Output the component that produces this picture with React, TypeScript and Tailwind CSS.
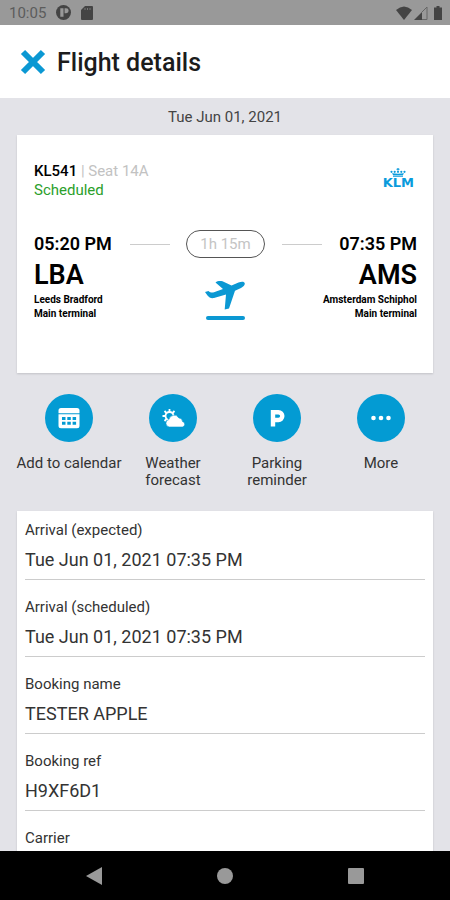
import React from 'react';

const actions = [
    { label: 'Add to calendar', icon: 'calendar' },
    { label: 'Weather forecast', icon: 'weather' },
    { label: 'Parking reminder', icon: 'parking' },
    { label: 'More', icon: 'more' },
];

const details = [
    { label: 'Arrival (expected)', value: 'Tue Jun 01, 2021 07:35 PM' },
    { label: 'Arrival (scheduled)', value: 'Tue Jun 01, 2021 07:35 PM' },
    { label: 'Booking name', value: 'TESTER APPLE' },
    { label: 'Booking ref', value: 'H9XF6D1' },
    { label: 'Carrier', value: '' },
];

// === Icons ===
//=====================================
const ActionIcon: React.FC<{ name: string }> = ({ name }) => {
    if (name === 'calendar') {
        return (
            <svg width="24" height="24" viewBox="0 0 24 24" fill="#fff" aria-hidden="true">
                <path d="M4 2h16a2.500 2.500 0 0 1 2.500 2.500V7.200h-21V4.500A2.500 2.500 0 0 1 4 2z" />
                <path fillRule="evenodd" d="M1.500 8.300h21v11.500a2.500 2.500 0 0 1-2.500 2.500H4a2.500 2.500 0 0 1-2.500-2.500zM5 11v3h3.500v-3zM10.300 11v3h3.500v-3zM15.600 11v3h3.500v-3zM5 15.800v3h3.500v-3zM10.300 15.800v3h3.500v-3zM15.600 15.800v3h3.500v-3z" />
            </svg>
        );
    }
    if (name === 'weather') {
        return (
            <svg width="24" height="24" viewBox="0 0 24 24" aria-hidden="true">
                <g stroke="#fff" strokeWidth="1.800" fill="none">
                    <circle cx="8.500" cy="10" r="4" />
                    <path d="M8.500 3v3M1.500 10h3M13 10h2.500M3.500 5l2 2M13.500 5l-2 2M3.500 15l2-2" />
                </g>
                <path d="M8.500 21a3.800 3.800 0 0 1-.6-7.500 5.400 5.400 0 0 1 10-1.500 3.600 3.600 0 0 1 3.600 3.500A2.800 2.800 0 0 1 21.500 21z" fill="#fff" stroke="#039bd3" strokeWidth=".6" />
            </svg>
        );
    }
    if (name === 'parking') {
        return (
            <svg width="24" height="24" viewBox="0 0 24 24" aria-hidden="true">
                <path d="M8 20.500V6.200h5.400a3.900 3.900 0 0 1 0 7.800H8" fill="none" stroke="#fff" strokeWidth="4.400" />
            </svg>
        );
    }
    return (
        <svg width="24" height="24" viewBox="0 0 24 24" fill="#fff" aria-hidden="true">
            <circle cx="4.500" cy="12" r="2.300" />
            <circle cx="12" cy="12" r="2.300" />
            <circle cx="19.500" cy="12" r="2.300" />
        </svg>
    );
};

const KlmLogo: React.FC = () => (
    <div className="flex flex-col items-center text-[#0a9bdc]" role="img" aria-label="KLM">
        <svg width="16" height="9" viewBox="0 0 16 9" fill="currentColor" aria-hidden="true">
            <path d="M7.400 0h1.200v.8h.9v1h-.9v.8H7.400v-.8h-.9v-1h.9z" />
            <circle cx="1.500" cy="3.800" r="1.100" />
            <circle cx="4.700" cy="3.800" r="1.100" />
            <circle cx="8" cy="3.800" r="1.100" />
            <circle cx="11.300" cy="3.800" r="1.100" />
            <circle cx="14.500" cy="3.800" r="1.100" />
            <path d="M2 5.300q6 .9 12 0l-1 1.700H3zM3 7.500h10v1.300H3z" />
        </svg>
        <span className="font-[DejaVu_Sans,sans-serif] text-[13px] leading-[11px] font-bold">KLM</span>
    </div>
);

const PlaneIcon: React.FC = () => (
    <svg width="42" height="42" viewBox="0 0 42 42" aria-hidden="true" fill="#0b98d3">
        <path d="M0 12l3.500-1c1.500 1.500 3.500 2 5.500 1.300L18 9l-7.500-6.500c2-1.700 4.500-1.800 7-1.200l9 4.200L33.500 2.500c3-1.300 6-1.200 6.300.8.200 2.200-1.800 3.700-3.800 4.700l-6 2.800L24 28.500l-4.300 1 1.300-15L9 18c-3 .5-5-.5-6.500-2.500z" />
        <rect x="1" y="36" width="39" height="4" rx="2" />
    </svg>
);

const FlightDetails: React.FC = () => {
    return (
        <div className="flex h-screen flex-col overflow-hidden bg-[#e3e3e8] font-[Roboto,sans-serif] text-[#333]">
            {/* Status bar */}
            <div className="flex h-[25px] shrink-0 items-center bg-[#999] pr-2 pl-[9px] text-[#444]">
                <span className="text-[15px] leading-5 text-[#5c5c5c]">10:05</span>
                <svg className="ml-[10px]" width="15" height="15" viewBox="0 0 14 14" aria-hidden="true">
                    <circle cx="7" cy="7" r="7" fill="currentColor" />
                    <path d="M4 3h3v8H4zM8 3h1.500a2.300 2.300 0 0 1 0 4.600H8z" fill="#999" />
                </svg>
                <svg className="ml-[10px]" width="12" height="14" viewBox="0 0 12 14" aria-hidden="true">
                    <path d="M4 0h7a1 1 0 0 1 1 1v12a1 1 0 0 1-1 1H1a1 1 0 0 1-1-1V4z" fill="currentColor" />
                    <path d="M4 2v2M6.500 2v2M9 2v2" stroke="#777" />
                </svg>
                <svg className="ml-auto" width="16" height="14" viewBox="0 0 16 14" fill="currentColor" aria-hidden="true">
                    <path d="M8 14L0 4q8-7 16 0z" />
                </svg>
                <svg className="ml-[2px]" width="14" height="14" viewBox="0 0 14 14" aria-hidden="true">
                    <path d="M8 6v8H0z" fill="currentColor" />
                    <path d="M8 6l5-5v12.500H8" fill="none" stroke="#666" />
                </svg>
                <svg className="ml-[6px]" width="8" height="14" viewBox="0 0 8 14" fill="currentColor" aria-hidden="true">
                    <path d="M2.500 0h3v1.500H8V14H0V1.500h2.500z" />
                </svg>
            </div>

            {/* Header */}
            <header className="flex h-[73px] shrink-0 items-center bg-white px-5">
                <button type="button" aria-label="Close">
                    <svg width="26" height="26" viewBox="0 0 26 26" aria-hidden="true">
                        <path d="M3 3l20 20M23 3L3 23" stroke="#0b98d3" strokeWidth="6" />
                    </svg>
                </button>
                <h1 className="ml-[11px] pt-[3px] text-[25px] font-medium text-[#1c1c1c]">Flight details</h1>
            </header>

            <main className="min-h-0 flex-1 overflow-hidden px-[17px]">
                <p className="pt-[9px] pb-2 text-center text-[15px] leading-5 text-[#444]">Tue Jun 01, 2021</p>

                {/* Flight card */}
                <section className="flex h-[238px] flex-col bg-white pt-[27px] pr-4 pl-[17px] text-black shadow-[0_1px_2px_rgba(0,0,0,0.15)]">
                    <div className="flex items-start justify-between">
                        <div className="text-[15px] leading-[19px]">
                            <p className="text-[#c2c2c2]">
                                <span className="font-medium text-black">KL541</span> | Seat 14A
                            </p>
                            <p className="text-[#2ba02b]">Scheduled</p>
                        </div>
                        <div className="pt-[6px] pr-[3px]">
                            <KlmLogo />
                        </div>
                    </div>

                    <div className="mt-[30px] grid grid-cols-[1fr_auto_1fr] items-center">
                        <p className="text-lg leading-7 font-semibold">05:20 PM</p>
                        <div className="flex w-[192px] items-center justify-between">
                            <span className="h-px w-10 bg-[#ccc]" />
                            <span className="rounded-full border border-[#555] px-[13px] text-[15px] leading-[26px] text-[#c4c4c4]">1h 15m</span>
                            <span className="h-px w-10 bg-[#ccc]" />
                        </div>
                        <p className="text-right text-lg leading-7 font-semibold">07:35 PM</p>
                    </div>
                    <div className="grid grid-cols-[1fr_auto_1fr]">
                        <div>
                            <p className="text-[27px] leading-[35px] font-semibold">LBA</p>
                            <p className="text-[10px] leading-[14px] font-bold">Leeds Bradford<br />Main terminal</p>
                        </div>
                        <div className="pt-[22px]">
                            <PlaneIcon />
                        </div>
                        <div className="text-right">
                            <p className="text-[27px] leading-[35px] font-semibold">AMS</p>
                            <p className="text-[10px] leading-[14px] font-bold">Amsterdam Schiphol<br />Main terminal</p>
                        </div>
                    </div>
                </section>

                {/* Actions */}
                <div className="grid grid-cols-4 pt-[21px] pb-[22px]">
                    {actions.map((action) => (
                        <button key={action.label} type="button" className="flex flex-col items-center">
                            <span className="flex size-12 items-center justify-center rounded-full bg-[#039bd3]">
                                <ActionIcon name={action.icon} />
                            </span>
                            <span className="mt-[13px] w-[108px] text-[15px] leading-[17px]">{action.label}</span>
                        </button>
                    ))}
                </div>

                {/* Details list */}
                <dl className="bg-white px-2 shadow-[0_1px_2px_rgba(0,0,0,0.15)]">
                    {details.map((item) => (
                        <div key={item.label} className="mb-2 border-b border-[#ccc] pt-[9px]">
                            <dt className="text-[15px] leading-5">{item.label}</dt>
                            <dd className="pt-2 pb-[7px] text-lg leading-6">{item.value}</dd>
                        </div>
                    ))}
                </dl>
            </main>

            {/* Navigation bar */}
            <nav className="flex h-[49px] shrink-0 items-center justify-between bg-black px-[86px]">
                <button type="button" aria-label="Back">
                    <svg width="16" height="18" viewBox="0 0 16 18" fill="#999" aria-hidden="true"><path d="M16 0v18L0 9z" /></svg>
                </button>
                <button type="button" aria-label="Home" className="size-4 rounded-full bg-[#999]" />
                <button type="button" aria-label="Recent apps" className="size-4 rounded-[1px] bg-[#999]" />
            </nav>
        </div>
    );
};

export default FlightDetails;
